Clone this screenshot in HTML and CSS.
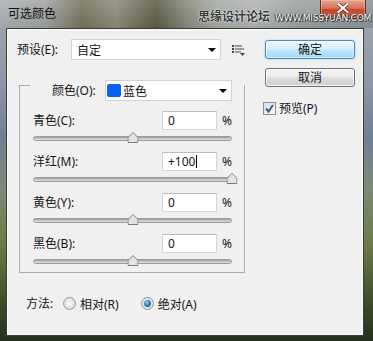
FILE: index.html
```html
<!DOCTYPE html>
<html lang="zh-CN">
<head>
  <title>可选颜色</title>
  <meta charset="UTF-8">
  <link rel="stylesheet" href="styles.css">
</head>
<body>
  <div class="window">
    <div class="titlebar">
      <span class="title">可选颜色</span>
      <div class="close-btn">
        <svg width="12" height="10" viewBox="0 0 12 10">
          <path d="M1.5 1 L10.5 9 M10.5 1 L1.5 9" stroke="#5a1a12" stroke-width="3.6" stroke-linecap="square"/>
          <path d="M1.5 1 L10.5 9 M10.5 1 L1.5 9" stroke="#fff" stroke-width="2.2" stroke-linecap="square"/>
        </svg>
      </div>
      <div class="watermark">
        <span class="wm-cn">思缘设计论坛</span>
        <span class="wm-en">WWW.MISSYUAN.COM</span>
      </div>
    </div>

    <div class="client">
      <div class="main">
        <div class="preset-row">
          <span class="label preset-label">预设(E):</span>
          <div class="select preset-select">
            <span>自定</span>
            <span class="caret"></span>
          </div>
          <svg class="menu-icon" width="13" height="11" viewBox="0 0 13 11">
            <rect x="0" y="0" width="2" height="2" fill="#444"/>
            <rect x="3" y="0.5" width="7" height="1" fill="#444"/>
            <rect x="0" y="3" width="2" height="2" fill="#444"/>
            <rect x="3" y="3.5" width="9" height="1" fill="#444"/>
            <rect x="0" y="6" width="2" height="2" fill="#444"/>
            <rect x="3" y="6.5" width="6" height="1" fill="#444"/>
            <path d="M8 8 L13 8 L10.5 11 Z" fill="#444"/>
          </svg>
        </div>

        <div class="group">
          <div class="group-head">
            <span class="label color-label">颜色(O):</span>
            <div class="select color-select">
              <span class="swatch"></span>
              <span>蓝色</span>
              <span class="caret"></span>
            </div>
          </div>

          <div class="adj">
            <div class="adj-row">
              <span class="label adj-label">青色(C):</span>
              <div class="field">0</div>
              <span class="pct">%</span>
            </div>
            <div class="slider">
              <div class="track"></div>
              <svg class="thumb" style="left: 50%" width="11" height="11" viewBox="0 0 11 11">
                <path d="M0.5 10.5 L0.5 5.5 L5.5 0.5 L10.5 5.5 L10.5 10.5 Z" fill="#e4e4e4" stroke="#7c7c7c"/>
              </svg>
            </div>
          </div>

          <div class="adj">
            <div class="adj-row">
              <span class="label adj-label">洋红(M):</span>
              <div class="field">+100<i class="cursor"></i></div>
              <span class="pct">%</span>
            </div>
            <div class="slider">
              <div class="track"></div>
              <svg class="thumb" style="left: 100%" width="11" height="11" viewBox="0 0 11 11">
                <path d="M0.5 10.5 L0.5 5.5 L5.5 0.5 L10.5 5.5 L10.5 10.5 Z" fill="#e4e4e4" stroke="#7c7c7c"/>
              </svg>
            </div>
          </div>

          <div class="adj">
            <div class="adj-row">
              <span class="label adj-label">黄色(Y):</span>
              <div class="field">0</div>
              <span class="pct">%</span>
            </div>
            <div class="slider">
              <div class="track"></div>
              <svg class="thumb" style="left: 50%" width="11" height="11" viewBox="0 0 11 11">
                <path d="M0.5 10.5 L0.5 5.5 L5.5 0.5 L10.5 5.5 L10.5 10.5 Z" fill="#e4e4e4" stroke="#7c7c7c"/>
              </svg>
            </div>
          </div>

          <div class="adj">
            <div class="adj-row">
              <span class="label adj-label">黑色(B):</span>
              <div class="field">0</div>
              <span class="pct">%</span>
            </div>
            <div class="slider">
              <div class="track"></div>
              <svg class="thumb" style="left: 50%" width="11" height="11" viewBox="0 0 11 11">
                <path d="M0.5 10.5 L0.5 5.5 L5.5 0.5 L10.5 5.5 L10.5 10.5 Z" fill="#e4e4e4" stroke="#7c7c7c"/>
              </svg>
            </div>
          </div>
        </div>

        <div class="method-row">
          <span class="label method-label">方法:</span>
          <span class="radio"></span>
          <span class="radio-text">相对(R)</span>
          <span class="radio radio-on"></span>
          <span class="radio-text">绝对(A)</span>
        </div>
      </div>

      <div class="side">
        <div class="btn btn-default">确定</div>
        <div class="btn">取消</div>
        <div class="check-row">
          <span class="checkbox">
            <svg width="11" height="11" viewBox="0 0 11 11">
              <path d="M2 5.5 L4.5 8.5 L9 2" fill="none" stroke="#3d5a96" stroke-width="2"/>
            </svg>
          </span>
          <span class="check-text">预览(P)</span>
        </div>
      </div>
    </div>
  </div>
</body>
</html>
```

FILE: styles.css
```css
:root {
  --face: #f0f0f0;
  --text: #151515;
  --line: #a9a9a9;
  --field-border: #d3d6db;
}

* {
  margin: 0;
  padding: 0;
  box-sizing: border-box;
}

body {
  width: 373px;
  height: 341px;
  overflow: hidden;
  font-family: "Noto Sans", "Noto Sans CJK SC", sans-serif;
  font-size: 12px;
  color: var(--text);
}

/* Window frame */
.window {
  width: 373px;
  height: 341px;
  display: flex;
  flex-direction: column;
  background: linear-gradient(to bottom, #a3a9ae 0, #8c96a6 25%, #6f8096 40%, #7c8a78 55%, #6c7a48 72%, #3f4e2c 88%, #24301c 100%);
}

.titlebar {
  position: relative;
  height: 28px;
  flex-shrink: 0;
  background:
    linear-gradient(to bottom, rgba(255, 255, 255, 0.12), rgba(0, 0, 0, 0.08)),
    linear-gradient(to right, #aeb3b6 0, #a2a6a2 12%, #77745f 22%, #8f8d7a 31%, #5d5d47 42%, #8a8c7f 50%, #a8aca6 58%, #b3b7b6 68%, #9ea4a4 80%, #8f9699 100%);
}

.title {
  display: block;
  padding: 6px 0 0 8px;
  line-height: 16px;
  color: #111;
}

.watermark {
  position: absolute;
  left: 198px;
  top: 7px;
  display: flex;
  align-items: baseline;
  gap: 5px;
  white-space: nowrap;
}

.wm-cn {
  font-family: "Noto Sans CJK SC", sans-serif;
  font-size: 12px;
  font-weight: 700;
  color: #3a3a3a;
  text-shadow: 0 0 2px #fff, 0 0 1px #fff;
}

.wm-en {
  font-family: "DejaVu Sans", sans-serif;
  font-size: 9px;
  letter-spacing: -0.2px;
  color: #fff;
  text-shadow: 0 0 1px #222, 1px 1px 0 #333, -1px 0 0 #333;
}

.close-btn {
  position: absolute;
  left: 320px;
  top: 0;
  width: 46px;
  height: 19px;
  border: 1px solid #6b2a20;
  border-top: none;
  border-radius: 0 0 4px 4px;
  background: linear-gradient(to bottom, #e6a391 0, #d7735c 45%, #c44429 55%, #cf6a4a 100%);
  display: flex;
  justify-content: center;
  align-items: flex-start;
  padding-top: 3px;
  box-shadow: inset 0 0 0 1px rgba(255, 210, 200, 0.4);
}

/* Client area */
.client {
  flex: 1;
  margin: 0 9px 5px 6px;
  background: var(--face);
  border: 1px solid #3a4030;
  box-shadow: inset 0 0 0 1px #fafafa;
  display: flex;
  padding: 10px 0 0 10px;
}

.main {
  width: 230px;
}

.label {
  display: inline-block;
  line-height: 17px;
  white-space: nowrap;
}

.preset-row {
  display: flex;
  align-items: center;
  height: 21px;
}

.preset-label {
  width: 54px;
}

.select {
  display: flex;
  align-items: center;
  height: 21px;
  background: #fff;
  border: 1px solid #d0d2d4;
  padding: 0 4px 0 5px;
}

.preset-select {
  width: 150px;
}

.caret {
  margin-left: auto;
  width: 0;
  height: 0;
  border-top: 4px solid #000;
  border-left: 4px solid transparent;
  border-right: 4px solid transparent;
}

.menu-icon {
  margin-left: 11px;
  margin-top: 2px;
}

/* Group box */
.group {
  width: 226px;
  margin: 25px 0 0 2px;
  border: 1px solid var(--line);
  padding-bottom: 5px;
}

.group-head {
  display: flex;
  align-items: center;
  height: 21px;
  margin: -6px 0 0 10px;
  padding-left: 22px;
  background: var(--face);
}

.color-label {
  width: 53px;
}

.color-select {
  width: 127px;
  padding-left: 1px;
}

.swatch {
  width: 14px;
  height: 13px;
  border-radius: 2px;
  background: #0a62f5;
  margin-right: 2px;
}

.adj {
  padding-left: 13px;
  margin-top: 8px;
}

.group-head + .adj {
  margin-top: 10px;
}

.adj-row {
  display: flex;
  align-items: center;
  height: 19px;
}

.adj-label {
  width: 129px;
}

.field {
  width: 55px;
  height: 19px;
  background: #fff;
  border: 1px solid var(--field-border);
  border-top-color: #b9bcc1;
  padding-left: 5px;
  line-height: 17px;
  display: flex;
  align-items: center;
}

.cursor {
  display: inline-block;
  width: 1px;
  height: 13px;
  background: #000;
  margin-left: 1px;
}

.pct {
  margin-left: 5px;
  line-height: 17px;
}

.slider {
  position: relative;
  width: 199px;
  height: 12px;
  margin-top: 2px;
  padding-top: 4px;
}

.track {
  height: 5px;
  border-radius: 3px;
  border: 1px solid #9d9d9d;
  background: linear-gradient(to bottom, #9a9a9a 0, #c6c6c6 50%, #dedede 100%);
}

.thumb {
  position: absolute;
  top: 0;
  transform: translateX(-50%);
}

/* Method row */
.method-row {
  display: flex;
  align-items: center;
  height: 17px;
  margin-top: 22px;
  padding-left: 9px;
}

.method-label {
  width: 37px;
}

.radio {
  width: 13px;
  height: 13px;
  border-radius: 50%;
  border: 1px solid #989898;
  background: radial-gradient(circle at 50% 50%, #fafafa 0, #e2e2e2 60%, #d2d2d2 100%);
  display: flex;
  align-items: center;
  justify-content: center;
}

.radio-on::after {
  content: '';
  width: 7px;
  height: 7px;
  border-radius: 50%;
  background: radial-gradient(circle at 40% 35%, #8fd8fa 0, #2a86c8 45%, #0d4e86 100%);
}

.radio-text {
  margin-left: 4px;
  margin-right: 22px;
}

/* Right column */
.side {
  margin-left: 18px;
  margin-top: 1px;
}

.btn {
  width: 90px;
  height: 19px;
  border-radius: 3px;
  border: 1px solid #707070;
  background: linear-gradient(to bottom, #f4f4f4 0, #ebebeb 48%, #dcdcdc 52%, #cfcfcf 100%);
  box-shadow: inset 0 0 0 1px rgba(255, 255, 255, 0.75);
  text-align: center;
  line-height: 17px;
}

.btn + .btn {
  margin-top: 9px;
}

.btn-default {
  border-color: #3d8fc9;
  background: linear-gradient(to bottom, #eaf6fd 0, #d9f0fc 48%, #bee6fd 52%, #a7d9f5 100%);
  box-shadow: inset 0 0 0 1px rgba(255, 255, 255, 0.6), 0 0 2px rgba(80, 170, 230, 0.6);
}

.check-row {
  display: flex;
  align-items: center;
  margin: 15px 0 0 -2px;
  height: 13px;
}

.checkbox {
  width: 13px;
  height: 13px;
  border: 1px solid #8e8f8f;
  background: linear-gradient(135deg, #dcdfe3 0, #f6f7f8 100%);
  display: flex;
  align-items: center;
  justify-content: center;
}

.check-text {
  margin-left: 3px;
  line-height: 17px;
}
```
